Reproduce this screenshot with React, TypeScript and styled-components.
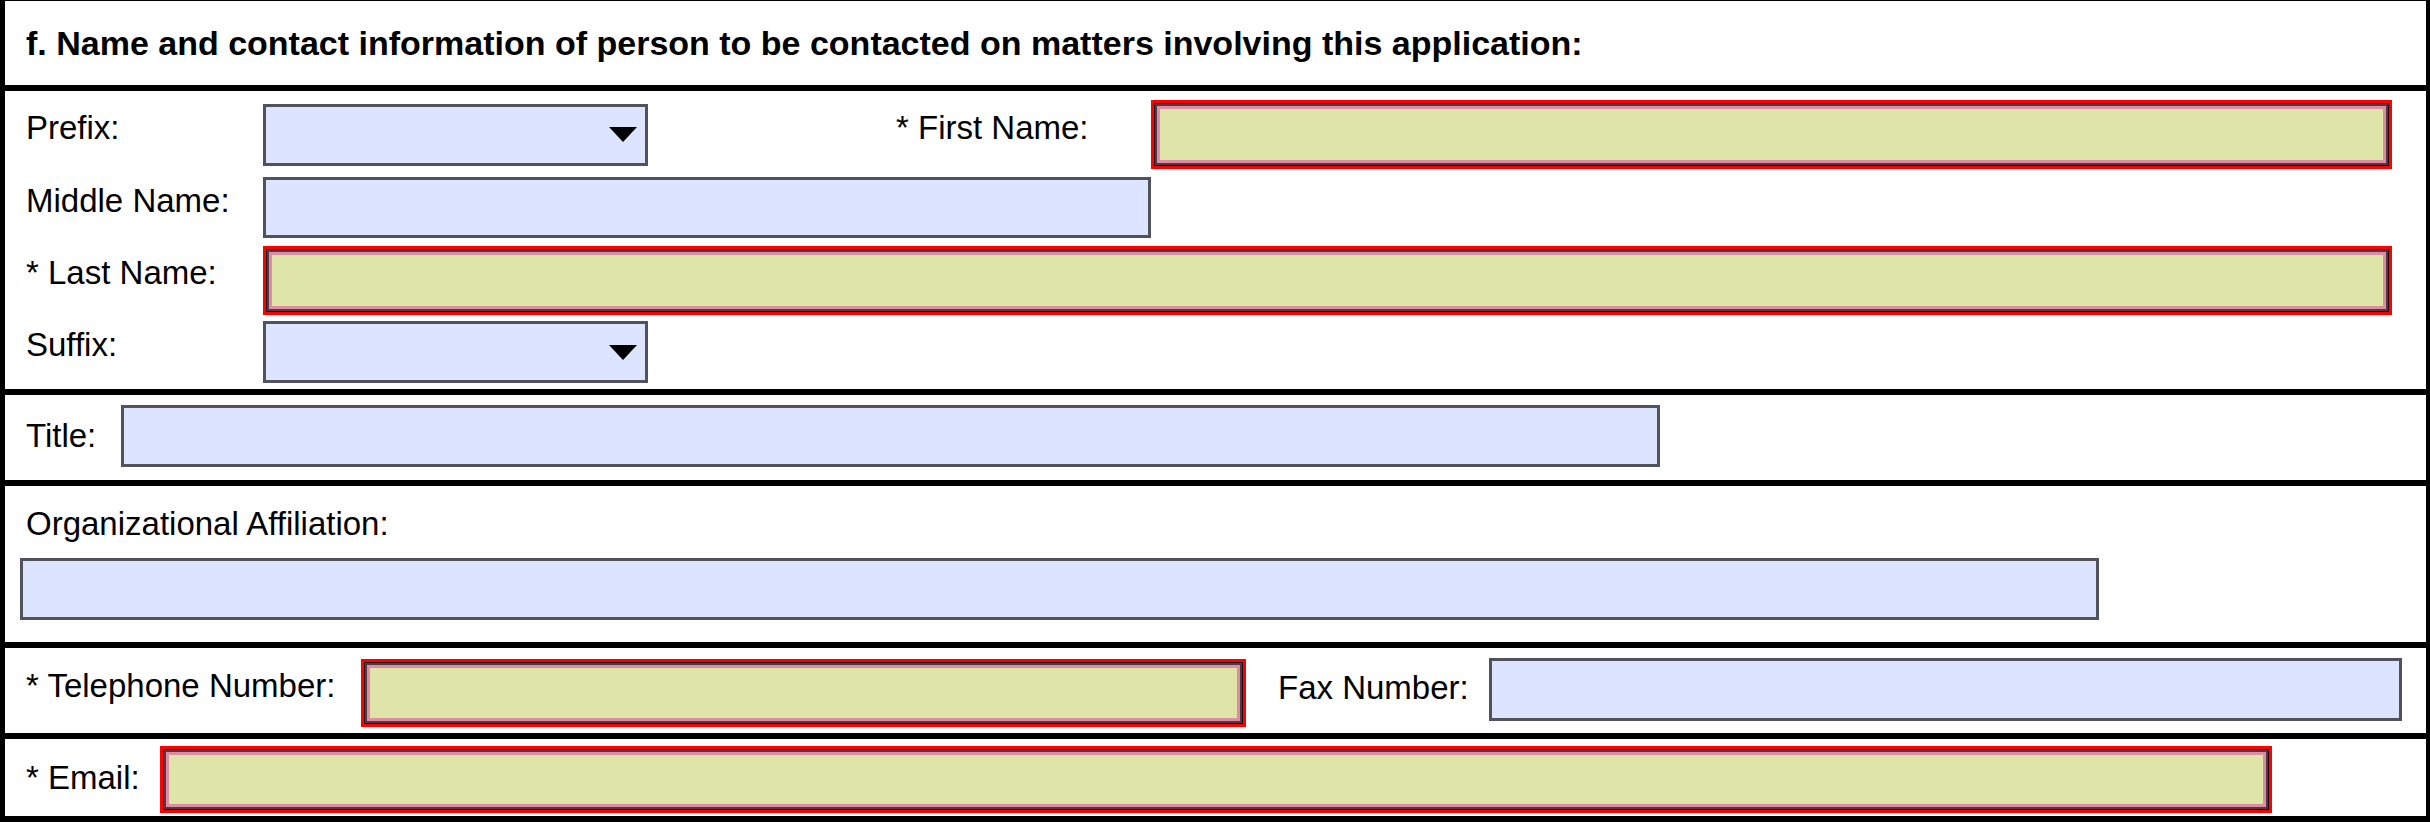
import React from 'react';
import styled, { createGlobalStyle } from 'styled-components';

const Global = createGlobalStyle`
  html, body { margin: 0; padding: 0; background: #ffffff; }
  body { font-family: "Liberation Sans", Arial, sans-serif; }
`;

const Form = styled.div`
  width: 2430px;
  height: 822px;
  box-sizing: border-box;
  border-left: 5px solid #000;
  border-right: 4px solid #000;
  border-top: 1px solid #000;
  display: flex;
  flex-direction: column;
  font-family: "Liberation Sans", Arial, sans-serif;
  color: #000;
  overflow: hidden;
`;

const Section = styled.div<{ $h: number }>`
  height: ${p => p.$h}px;
  flex: none;
  box-sizing: border-box;
  border-bottom: 6px solid #000;
`;

const Header = styled(Section)`
  display: flex;
  align-items: center;
  padding-left: 21px;
  font-size: 34px;
  font-weight: 700;
  white-space: nowrap;
`;

const NameGrid = styled(Section)`
  display: grid;
  grid-template-columns: 237px 385px 248px 255px 1241px;
  grid-template-rows: 73px 73px 72px 72px;
  padding: 7px 0 0 21px;
  align-items: center;
`;

const Row = styled(Section)<{ $pt?: number }>`
  display: flex;
  align-items: center;
  padding: ${p => p.$pt ?? 0}px 0 0 21px;
`;

const Stack = styled(Section)`
  display: flex;
  flex-direction: column;
  align-items: flex-start;
  padding: 19px 0 0 15px;
`;

const Label = styled.div<{ $w?: number; $lift?: number; $indent?: number; $col?: string }>`
  font-size: 33px;
  line-height: 38px;
  white-space: nowrap;
  flex: none;
  ${p => (p.$w ? `width: ${p.$w}px;` : '')}
  ${p => (p.$col ? `grid-column: ${p.$col};` : '')}
  margin-bottom: ${p => (p.$lift ?? 0) * 2}px;
  margin-left: ${p => p.$indent ?? 0}px;
`;

const Field = styled.div<{ $w?: number; $h?: number; $col?: string; $mt?: number; $mb?: number }>`
  box-sizing: border-box;
  height: ${p => p.$h ?? 62}px;
  ${p => (p.$w ? `width: ${p.$w}px;` : '')}
  ${p => (p.$col ? `grid-column: ${p.$col};` : '')}
  margin-top: ${p => p.$mt ?? 0}px;
  margin-bottom: ${p => p.$mb ?? 0}px;
  flex: none;
  background: #dde4ff;
  border: 3px solid #50535b;
`;

const Required = styled(Field)`
  background: #dfe4a8;
  border: 3px solid #ff0000;
  box-shadow: inset 0 0 0 1px #1e0a12, inset 0 0 0 3px #553646, inset 0 0 0 6px #dc8da2;
`;

const Select = styled(Field)`
  display: flex;
  align-items: center;
  justify-content: flex-end;
  padding-right: 8px;
`;

const Gap = styled.div<{ $w: number }>`
  width: ${p => p.$w}px;
  flex: none;
`;

const Arrow = () => (
  <svg width="28" height="15" viewBox="0 0 28 15">
    <polygon points="0,0 28,0 14,15" fill="#000" />
  </svg>
);

export default function App() {
  return (
    <>
      <Global />
      <Form>
        <Header $h={90}>
          f. Name and contact information of person to be contacted on matters involving this application:
        </Header>

        <NameGrid $h={304}>
          <Label $col="1" $lift={7}>Prefix:</Label>
          <Select $col="2" $h={62}>
            <Arrow />
          </Select>
          <Label $col="4" $lift={7}>* First Name:</Label>
          <Required $col="5" $h={69} />

          <Label $col="1" $lift={7}>Middle Name:</Label>
          <Field $col="2 / 5" $h={61} />

          <Label $col="1" $lift={7}>* Last Name:</Label>
          <Required $col="2 / 6" $h={69} />

          <Label $col="1" $lift={7}>Suffix:</Label>
          <Select $col="2" $h={62}>
            <Arrow />
          </Select>
        </NameGrid>

        <Row $h={91} $pt={0}>
          <Label $w={95} $lift={2}>Title:</Label>
          <Field $w={1539} $h={62} $mb={3} />
        </Row>

        <Stack $h={162}>
          <Label $indent={6}>Organizational Affiliation:</Label>
          <Field $w={2079} $h={62} $mt={15} />
        </Stack>

        <Row $h={91} $pt={5}>
          <Label $w={335} $lift={7}>* Telephone Number:</Label>
          <Required $w={885} $h={68} />
          <Gap $w={32} />
          <Label $w={211} $lift={5}>Fax Number:</Label>
          <Field $w={913} $h={63} $mb={7} />
        </Row>

        <Row $h={83} $pt={4}>
          <Label $w={134} $lift={2}>* Email:</Label>
          <Required $w={2112} $h={67} />
        </Row>
      </Form>
    </>
  );
}
